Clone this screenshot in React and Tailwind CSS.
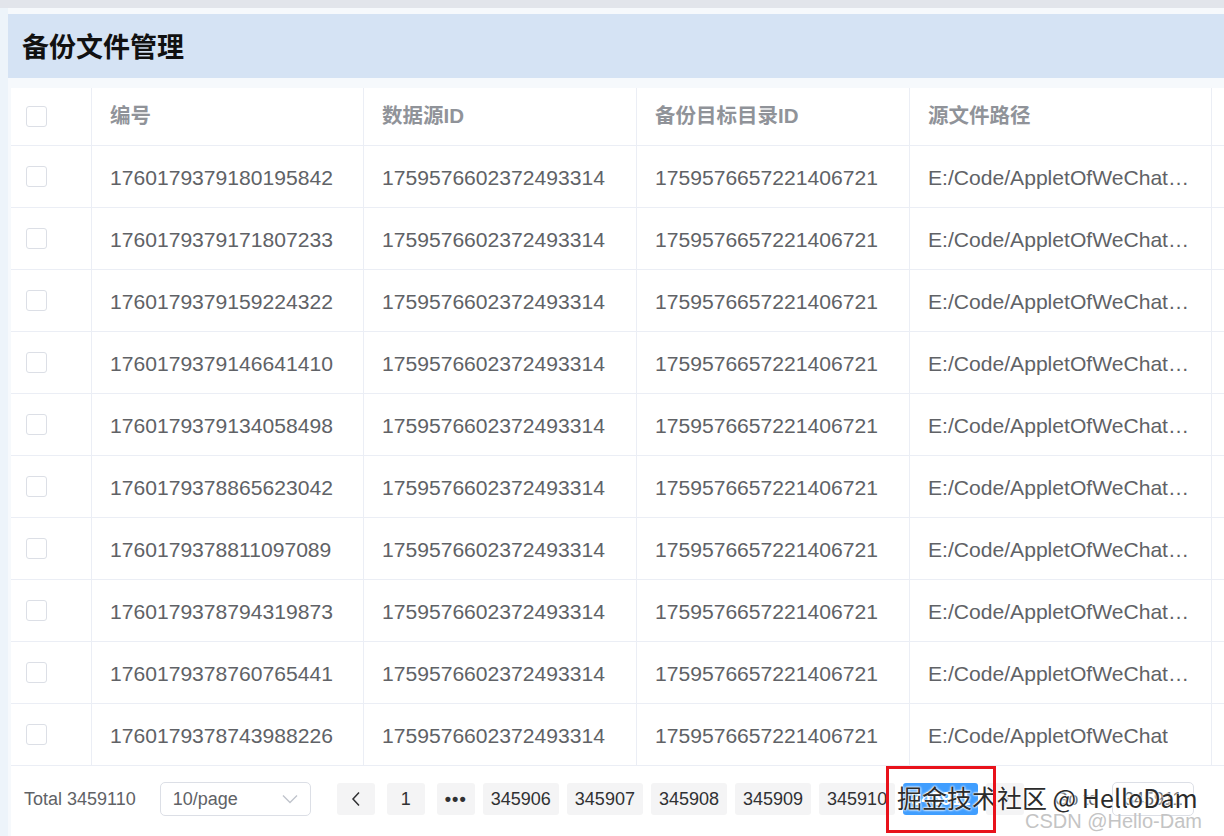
import React from "react";

const rows = [
  "1760179379180195842",
  "1760179379171807233",
  "1760179379159224322",
  "1760179379146641410",
  "1760179379134058498",
  "1760179378865623042",
  "1760179378811097089",
  "1760179378794319873",
  "1760179378760765441",
  "1760179378743988226",
];

function Checkbox() {
  return <div className="w-[21px] h-[21px] rounded-[3px] border border-[#dcdfe6] bg-white" />;
}

function PageBtn({ children, className = "", active = false }) {
  return (
    <div
      className={
        "h-[32px] min-w-[38px] px-[8px] rounded-[3px] flex items-center justify-center text-[18px] " +
        (active ? "bg-[#409eff] text-white font-bold " : "bg-[#f4f4f5] text-[#303133] ") +
        className
      }
    >
      {children}
    </div>
  );
}

export default function App() {
  const font = { fontFamily: '"Liberation Sans", "Noto Sans CJK SC", sans-serif' };
  return (
    <div
      className="relative w-[1224px] h-[836px] overflow-hidden bg-[#edf4fa]"
      style={font}
    >
      <div className="h-[8px] bg-[#e2e5eb]" />
      <div className="ml-[8px] h-[828px] bg-[#f6f9fc] pt-[6px] flex flex-col">
        <div className="h-[64px] bg-[#d5e3f4] flex items-center pl-[14px]">
          <span
            className="text-[27px] font-bold text-[#111]"
            style={{ fontFamily: '"Noto Sans CJK SC", sans-serif' }}
          >
            备份文件管理
          </span>
        </div>
        <div className="mt-[10px] ml-[3px] bg-white flex-1 flex flex-col">
          <div className="w-[1400px]">
            {/* header */}
            <div className="flex h-[58px] border-b border-[#ebeef5] text-[#909399] font-bold text-[20.5px]">
              <div className="w-[81px] border-r border-[#ebeef5] flex items-center pl-[15px]">
                <Checkbox />
              </div>
              <div className="w-[272px] border-r border-[#ebeef5] flex items-center pl-[18px]">编号</div>
              <div className="w-[273px] border-r border-[#ebeef5] flex items-center pl-[18px]">数据源ID</div>
              <div className="w-[273px] border-r border-[#ebeef5] flex items-center pl-[18px]">备份目标目录ID</div>
              <div className="w-[302px] border-r border-[#ebeef5] flex items-center pl-[18px]">源文件路径</div>
              <div className="flex-1" />
            </div>
            {rows.map((id, i) => (
              <div key={id} className="flex h-[62px] border-b border-[#ebeef5] text-[#606266] text-[21.1px]">
                <div className="w-[81px] border-r border-[#ebeef5] flex items-center pl-[15px]">
                  <Checkbox />
                </div>
                <div className="w-[272px] border-r border-[#ebeef5] flex items-center pl-[18px] pt-[2px]">{id}</div>
                <div className="w-[273px] border-r border-[#ebeef5] flex items-center pl-[18px] pt-[2px]">1759576602372493314</div>
                <div className="w-[273px] border-r border-[#ebeef5] flex items-center pl-[18px] pt-[2px]">1759576657221406721</div>
                <div className="w-[302px] border-r border-[#ebeef5] flex items-center pl-[18px] pr-[19px] pt-[2px] min-w-0">
                  <span className="truncate">
                    {i === rows.length - 1 ? "E:/Code/AppletOfWeChat" : "E:/Code/AppletOfWeChat/backup/file"}
                  </span>
                </div>
                <div className="flex-1" />
              </div>
            ))}
          </div>
          {/* pagination */}
          <div className="flex items-center pl-[13px] h-[66px] text-[#606266] text-[18px]">
            <span>Total 3459110</span>
            <div className="ml-[24px] w-[151px] h-[34px] rounded-[5px] border border-[#dcdfe6] flex items-center justify-between pl-[12px] pr-[12px]">
              <span>10/page</span>
              <svg width="16" height="10" viewBox="0 0 16 10" fill="none">
                <path d="M1 1.5 L8 8.5 L15 1.5" stroke="#c0c4cc" strokeWidth="1.4" />
              </svg>
            </div>
            <PageBtn className="ml-[26px] min-w-[35px] px-0">
              <svg width="10" height="16" viewBox="0 0 10 16" fill="none">
                <path d="M8 1.5 L2 8 L8 14.5" stroke="#303133" strokeWidth="1.5" />
              </svg>
            </PageBtn>
            <PageBtn className="ml-[12px]">1</PageBtn>
            <PageBtn className="ml-[12px] font-bold tracking-[1px] text-[16px]">•••</PageBtn>
            <PageBtn className="ml-[8px]">345906</PageBtn>
            <PageBtn className="ml-[8px]">345907</PageBtn>
            <PageBtn className="ml-[8px]">345908</PageBtn>
            <PageBtn className="ml-[8px]">345909</PageBtn>
            <PageBtn className="ml-[8px]">345910</PageBtn>
            <PageBtn className="ml-[8px]" active>345911</PageBtn>
            <PageBtn className="ml-[8px] min-w-[35px] px-0">
              <svg width="10" height="16" viewBox="0 0 10 16" fill="none">
                <path d="M2 1.5 L8 8 L2 14.5" stroke="#c0c4cc" strokeWidth="1.5" />
              </svg>
            </PageBtn>
            <span className="ml-[30px]">Go to</span>
            <div className="ml-[14px] w-[82px] h-[34px] rounded-[5px] border border-[#dcdfe6] flex items-center justify-center">
              345911
            </div>
          </div>
        </div>
      </div>

      {/* watermarks */}
      <div
        className="absolute left-[897px] top-[785px] text-[25px] text-[#2b2b2b] whitespace-nowrap leading-none"
        style={{
          fontFamily: '"Noto Sans CJK SC", "Liberation Sans", sans-serif',
          textShadow: "0 0 2px #fff, 0 0 2px #fff, 0 0 3px #fff",
        }}
      >
        掘金技术社区 @ HelloDam
      </div>
      <div className="absolute left-[1025px] top-[811px] text-[20px] text-[#c4c4c4] whitespace-nowrap leading-none">
        CSDN @Hello-Dam
      </div>
      <div className="absolute left-[886px] top-[766px] w-[110px] h-[67px] border-[3px] border-[#e8121b]" />
    </div>
  );
}
